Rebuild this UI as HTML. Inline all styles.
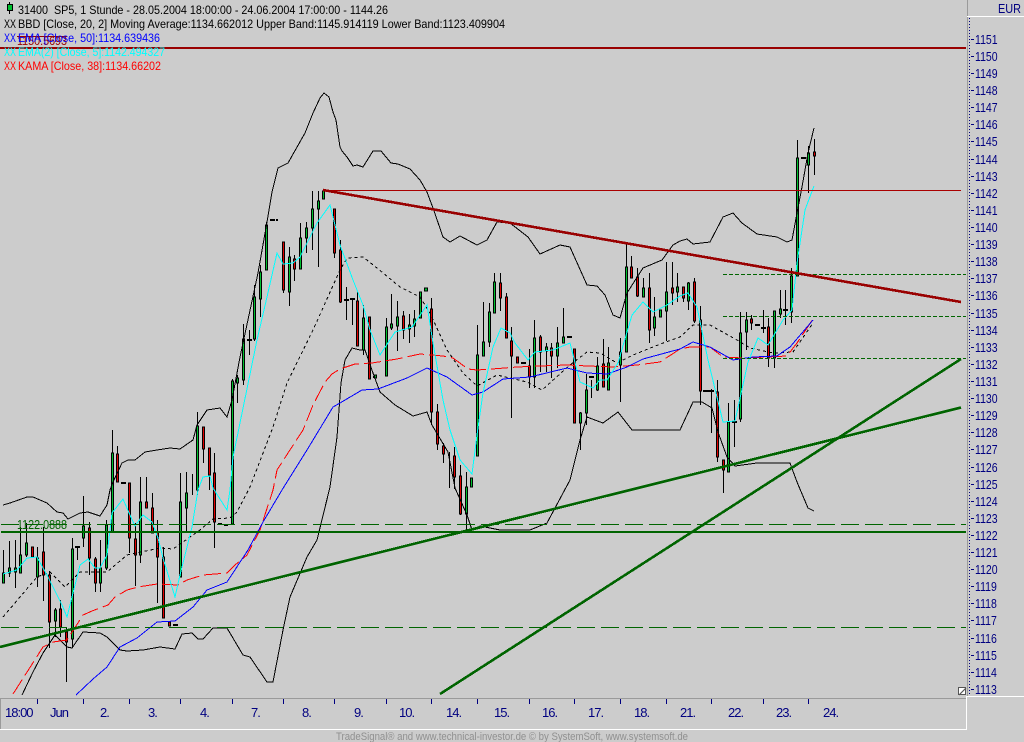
<!DOCTYPE html>
<html><head><meta charset="utf-8"><title>Chart</title>
<style>html,body{margin:0;padding:0;background:#ccc;width:1024px;height:742px;overflow:hidden}
svg{display:block;font-family:"Liberation Sans",Arial,sans-serif}
.l{fill:none;stroke-width:1;shape-rendering:crispEdges}
</style></head><body>
<svg width="1024" height="742" viewBox="0 0 1024 742" xmlns="http://www.w3.org/2000/svg">
<rect width="1024" height="742" fill="#ccc"/>
<!-- candles -->
<path shape-rendering="crispEdges" fill="none" stroke="#000" d="M3.5 550V583M9.5 541V577M15.5 540V588M20.5 527V573M26.5 523V557M32.5 547V557M37.5 547V587M43.5 527V601M49.5 571V648M55.5 608V637M60.5 600V637M66.5 627V682M72.5 538V648M77.5 547V560M83.5 496V547M89.5 522V575M95.5 557V592M100.5 540V592M106.5 520V570M112.5 430V532M117.5 446V482M129.5 483V553M135.5 523V586M140.5 477V563M146.5 477V508M152.5 493V533M157.5 520V603M163.5 547V618M180.5 473V577M186.5 472V533M192.5 474V495M197.5 412V495M203.5 427V463M209.5 448V490M214.5 453V548M232.5 379V524M237.5 375V403M243.5 324V385M249.5 330V355M254.5 285V341M260.5 265V317M266.5 222V270M283.5 242V293M289.5 247V306M294.5 255V281M300.5 223V269M306.5 222V253M312.5 191V250M318.5 191V267M323.5 190V199M334.5 209V258M340.5 240V303M346.5 287V320M352.5 299V325M357.5 291V346M363.5 305V355M369.5 317V379M386.5 318V376M391.5 294V330M397.5 301V351M403.5 311V339M409.5 314V343M414.5 310V337M420.5 292V318M431.5 298V425M437.5 404V450M443.5 443V463M449.5 452V488M454.5 447V489M460.5 465V515M466.5 472V530M477.5 325V456M483.5 302V356M489.5 303V347M494.5 273V313M500.5 273V311M506.5 293V338M511.5 327V418M517.5 357V363M529.5 349V388M534.5 320V388M540.5 335V372M546.5 343V372M551.5 343V378M557.5 327V368M563.5 308V343M574.5 349V423M580.5 412V450M586.5 374V425M591.5 380V398M597.5 357V391M603.5 339V387M608.5 347V390M620.5 338V402M626.5 244V352M631.5 256V278M637.5 268V297M643.5 278V297M649.5 273V343M654.5 297V336M660.5 310V317M666.5 262V341M672.5 262V305M677.5 273V302M683.5 287V302M688.5 282V310M694.5 278V323M700.5 306V405M711.5 389V433M717.5 380V462M723.5 460V493M728.5 403V472M734.5 400V447M740.5 312V422M746.5 312V350M751.5 315V330M763.5 310V333M768.5 318V367M774.5 311V368M780.5 290V318M785.5 290V325M791.5 268V323M797.5 140V276M808.5 146V193M814.5 139V175"/>
<path shape-rendering="crispEdges" fill="none" stroke="#000" stroke-width="2" d="M75 547h5M121 483h5M173 625h5M218 524h4M224 525h4M247 340h5M270 220h5M276 220h2M344 300h5M350 299h5M373 377h3M521 363h5M567 337h5M589 377h5M704 391h5M709 391h5M732 422h5M755 325h5M761 328h5M783 310h5M801 158h5M703 391h3"/>
<path shape-rendering="crispEdges" fill="#00c030" stroke="#000" d="M2.5 573h2v10h-2zM8.5 568h2v5h-2zM14.5 568h2v4h-2zM19.5 555h2v18h-2zM25.5 543h2v12h-2zM36.5 558h2v19h-2zM54.5 610h2v11h-2zM71.5 549h2v90h-2zM82.5 526h2v12h-2zM99.5 568h2v15h-2zM105.5 525h2v43h-2zM111.5 453h2v79h-2zM139.5 502h2v53h-2zM179.5 502h2v75h-2zM185.5 493h2v15h-2zM196.5 426h2v64h-2zM231.5 381h2v143h-2zM236.5 378h2v5h-2zM242.5 339h2v41h-2zM253.5 297h2v42h-2zM259.5 272h2v27h-2zM265.5 225h2v45h-2zM288.5 257h2v35h-2zM299.5 238h2v31h-2zM305.5 228h2v10h-2zM311.5 209h2v19h-2zM317.5 201h2v8h-2zM322.5 191h2v8h-2zM362.5 318h2v32h-2zM374.5 375h2v3h-2zM385.5 327h2v49h-2zM390.5 324h2v4h-2zM396.5 317h2v9h-2zM408.5 325h2v4h-2zM413.5 319h2v7h-2zM419.5 292h2v26h-2zM424.5 288h3v3h-3zM465.5 487h2v27h-2zM470.5 478h2v9h-2zM476.5 355h2v101h-2zM482.5 342h2v14h-2zM488.5 312h2v30h-2zM493.5 282h2v31h-2zM533.5 338h2v39h-2zM545.5 347h2v4h-2zM556.5 343h2v13h-2zM562.5 337h2v6h-2zM579.5 413h2v10h-2zM585.5 390h2v23h-2zM596.5 366h2v24h-2zM607.5 363h2v27h-2zM619.5 352h2v13h-2zM625.5 267h2v85h-2zM642.5 288h2v9h-2zM653.5 317h2v11h-2zM659.5 310h2v7h-2zM665.5 292h2v19h-2zM676.5 287h2v5h-2zM687.5 283h2v18h-2zM727.5 422h2v50h-2zM739.5 333h2v86h-2zM745.5 320h2v12h-2zM773.5 311h2v47h-2zM779.5 309h2v5h-2zM790.5 276h2v36h-2zM796.5 158h2v118h-2zM807.5 153h2v12h-2z"/>
<path shape-rendering="crispEdges" fill="#e00000" stroke="#000" d="M31.5 547h2v10h-2zM42.5 552h2v23h-2zM48.5 575h2v47h-2zM59.5 609h2v18h-2zM65.5 632h2v10h-2zM88.5 528h2v30h-2zM94.5 559h2v24h-2zM116.5 454h2v28h-2zM128.5 483h2v55h-2zM134.5 539h2v16h-2zM145.5 502h2v6h-2zM151.5 508h2v25h-2zM156.5 532h2v25h-2zM162.5 557h2v61h-2zM168.5 622h2v4h-2zM202.5 427h2v22h-2zM208.5 448h2v27h-2zM213.5 473h2v49h-2zM282.5 242h2v48h-2zM293.5 259h2v10h-2zM333.5 209h2v44h-2zM339.5 250h2v52h-2zM356.5 301h2v45h-2zM368.5 317h2v62h-2zM402.5 316h2v14h-2zM430.5 309h2v103h-2zM436.5 412h2v32h-2zM442.5 446h2v8h-2zM453.5 456h2v21h-2zM459.5 476h2v38h-2zM499.5 283h2v15h-2zM505.5 297h2v41h-2zM510.5 341h2v15h-2zM516.5 357h2v6h-2zM528.5 366h2v11h-2zM539.5 337h2v15h-2zM550.5 348h2v8h-2zM573.5 349h2v74h-2zM602.5 364h2v23h-2zM630.5 267h2v11h-2zM636.5 277h2v19h-2zM648.5 288h2v42h-2zM671.5 288h2v5h-2zM682.5 287h2v11h-2zM693.5 282h2v39h-2zM699.5 320h2v71h-2zM716.5 392h2v65h-2zM722.5 460h2v10h-2zM750.5 319h2v4h-2zM767.5 327h2v31h-2zM813.5 152h2v4h-2z"/>
<!-- black dotted middle band -->
<polyline class="l" stroke="#000" stroke-dasharray="3 3" points="3,617 37,577 50,572 65,587 80,572 107,572 127,555 160,548 173,549 200,530 213,519 230,518 237,512 250,487 273,427 287,383 313,330 340,270 347,258 363,257 377,268 400,287 420,297 430,313 447,350 463,373 477,386 497,375 527,382 542,390 570,365 587,352 600,353 617,363 633,355 663,343 680,337 693,325 710,325 737,340 750,348 773,353 793,352 813,323"/>
<!-- upper band -->
<polyline class="l" stroke="#000" points="3,505 10,503 27,497 33,497 47,503 57,512 63,513 68,519 80,513 88,512 100,516 107,505 110,490 113,482 122,463 128,460 135,460 145,452 157,450 170,448 180,449 193,440 197,425 207,410 220,408 227,417 232,400 240,357 258,273 267,222 272,192 278,168 288,163 305,133 313,113 320,98 324,93 329,97 333,112 336,120 340,147 342,151 347,157 353,166 357,165 363,167 373,151 381,151 391,163 398,164 410,169 420,180 427,192 433,208 443,237 450,242 460,236 477,245 487,240 497,222 510,223 528,237 540,254 560,245 570,247 587,285 597,286 605,295 613,315 620,318 627,293 643,268 662,260 673,245 680,241 687,239 693,244 710,242 723,217 733,213 742,223 757,234 777,237 787,242 792,240 797,213 802,187 808,153 814,128"/>
<!-- lower band -->
<polyline class="l" stroke="#000" points="22,695 33,672 43,653 55,635 67,647 72,648 83,632 100,633 107,637 120,650 127,651 143,650 160,647 175,649 182,634 192,633 198,639 203,639 213,628 227,628 243,655 250,657 267,682 273,682 283,630 290,597 307,557 317,540 330,487 337,437 341,383 345,360 352,348 360,350 365,350 373,373 380,392 395,405 413,416 427,412 432,425 448,452 455,488 467,515 472,530 480,526 500,530 530,530 547,523 570,480 580,440 587,417 603,423 618,412 632,430 680,430 693,402 702,402 712,408 718,432 727,457 735,466 757,463 790,463 797,482 808,508 814,511"/>
<!-- KAMA -->
<polyline class="l" stroke="#ff0000" stroke-dasharray="17 5" points="13,694 29,669 43,647 53,642 67,640 83,615 92,611 108,605 115,597 127,590 138,587 157,584 178,585 187,580 203,575 227,573 235,565 247,555 260,530 273,490 277,470 288,453 303,430 313,405 325,382 332,374 340,369 355,364 372,363 397,359 420,354 443,356 453,358 468,369 477,370 492,369 517,367 540,366 567,365 588,366 613,367 637,365 660,362 680,349 690,347 710,347 723,357 743,358 767,357 787,356 797,343 813,319"/>
<!-- EMA 50 -->
<polyline class="l" stroke="#0000ff" points="76,695 93,679 107,667 120,647 137,638 157,622 175,621 193,607 207,590 227,582 248,550 263,522 282,490 307,450 333,407 340,403 362,390 378,389 407,378 427,368 447,377 472,395 483,392 503,379 530,377 567,368 587,373 607,374 627,367 643,359 680,349 693,342 710,347 733,360 753,357 777,356 790,347 813,320"/>
<!-- EMA 2 -->
<polyline class="l" stroke="#00ffff" points="3,574 17,570 27,558 37,557 48,577 62,605 67,617 73,593 80,565 88,559 95,568 100,568 107,555 112,513 123,499 130,515 135,526 143,515 152,522 158,538 163,558 175,597 180,575 192,527 198,490 203,477 210,476 213,488 227,510 230,490 233,457 257,340 267,297 277,253 283,264 293,263 300,257 307,243 317,223 330,205 340,245 353,280 363,305 370,330 380,355 395,332 412,327 427,305 433,343 443,400 450,430 460,460 472,474 477,435 483,393 493,347 501,328 510,333 515,343 528,360 535,352 553,350 570,343 580,382 593,388 600,380 607,380 618,363 632,315 643,302 653,312 667,305 680,296 688,293 697,307 708,360 723,422 735,421 748,362 758,338 768,345 783,320 792,310 797,263 805,210 814,186"/>
<!-- horizontal & trend lines -->
<g shape-rendering="crispEdges">
<rect x="0" y="47" width="966" height="2" fill="#990000"/>
<rect x="323" y="190" width="638" height="1" fill="#aa0000"/>
<rect x="1" y="531" width="965" height="2" fill="#006400"/>
<line x1="1" y1="524.5" x2="966" y2="524.5" stroke="#006400" stroke-dasharray="18 6"/>
<line x1="1" y1="627.5" x2="966" y2="627.5" stroke="#006400" stroke-dasharray="18 6"/>
<line x1="723" y1="274.5" x2="966" y2="274.5" stroke="#006400" stroke-dasharray="4 2"/>
<line x1="723" y1="316.5" x2="966" y2="316.5" stroke="#006400" stroke-dasharray="4 2"/>
<line x1="723" y1="358.5" x2="966" y2="358.5" stroke="#006400" stroke-dasharray="4 2"/>
<line x1="323" y1="190" x2="961" y2="302" stroke="#990000" stroke-width="2.6"/>
<line x1="0" y1="647" x2="961" y2="407.5" stroke="#006400" stroke-width="2.6"/>
<line x1="440" y1="694" x2="961" y2="359" stroke="#006400" stroke-width="2.6"/>
</g>
<!-- legend -->
<g font-size="12">
<text x="17" y="45" fill="#990000" textLength="50" lengthAdjust="spacingAndGlyphs">1150.5693</text>
<rect x="17" y="36" width="50" height="1" fill="#990000"/>
<text x="17" y="529" fill="#006400" font-size="13" textLength="50" lengthAdjust="spacingAndGlyphs">1122.0888</text>
<path d="M9.5 2V14" stroke="#000" shape-rendering="crispEdges"/>
<rect x="7.5" y="4.5" width="5" height="6" fill="#00c030" stroke="#000" shape-rendering="crispEdges"/>
<text x="18" y="14" fill="#000" textLength="370" lengthAdjust="spacingAndGlyphs">31400&#160;&#160;SP5, 1 Stunde - 28.05.2004 18:00:00 - 24.06.2004 17:00:00 - 1144.26</text>
<text x="4" y="28" fill="#000" textLength="12" lengthAdjust="spacingAndGlyphs">XX</text>
<text x="18" y="28" fill="#000" textLength="487" lengthAdjust="spacingAndGlyphs">BBD [Close, 20, 2] Moving Average:1134.662012 Upper Band:1145.914119 Lower Band:1123.409904</text>
<text x="4" y="42" fill="#0000ff" textLength="12" lengthAdjust="spacingAndGlyphs">XX</text>
<text x="18" y="42" fill="#0000ff" textLength="142" lengthAdjust="spacingAndGlyphs">EMA [Close, 50]:1134.639436</text>
<text x="4" y="56" fill="#00ffff" textLength="12" lengthAdjust="spacingAndGlyphs">XX</text>
<text x="18" y="56" fill="#00ffff" textLength="147" lengthAdjust="spacingAndGlyphs">EMA(2) [Close, 5]:1142.494327</text>
<text x="4" y="70" fill="#ff0000" textLength="12" lengthAdjust="spacingAndGlyphs">XX</text>
<text x="18" y="70" fill="#ff0000" textLength="143" lengthAdjust="spacingAndGlyphs">KAMA [Close, 38]:1134.66202</text>
</g>
<!-- right axis -->
<rect x="966" y="0" width="58" height="742" fill="#ccc"/>
<g shape-rendering="crispEdges">
<rect x="967" y="0" width="1" height="697" fill="#9a9a9a"/>
<rect x="967" y="16" width="57" height="1" fill="#fff"/>
<rect x="967" y="696" width="57" height="1" fill="#fff"/>
<line x1="969.5" y1="18" x2="969.5" y2="696" stroke="#000080" stroke-dasharray="1 2"/>
<path stroke="#000080" d="M971 39.500h3M971 56.500h3M971 73.500h3M971 90.500h3M971 107.500h3M971 124.500h3M971 141.500h3M971 159.500h3M971 176.500h3M971 193.500h3M971 210.500h3M971 227.500h3M971 244.500h3M971 261.500h3M971 278.500h3M971 295.500h3M971 313.500h3M971 330.500h3M971 347.500h3M971 364.500h3M971 381.500h3M971 398.500h3M971 415.500h3M971 432.500h3M971 449.500h3M971 467.500h3M971 484.500h3M971 501.500h3M971 518.500h3M971 535.500h3M971 552.500h3M971 569.500h3M971 586.500h3M971 603.500h3M971 620.500h3M971 638.500h3M971 655.500h3M971 672.500h3M971 689.500h3"/>
</g>
<text x="998" y="13" fill="#000080" font-size="13" textLength="23" lengthAdjust="spacingAndGlyphs">EUR</text>
<g fill="#000080" font-size="13" transform="translate(975 0) scale(.81 1)">
<text y="44">1151</text><text y="61">1150</text><text y="78">1149</text><text y="95">1148</text><text y="112">1147</text><text y="129">1146</text><text y="146">1145</text><text y="164">1144</text><text y="181">1143</text><text y="198">1142</text><text y="215">1141</text><text y="232">1140</text><text y="249">1139</text><text y="266">1138</text><text y="283">1137</text><text y="300">1136</text><text y="318">1135</text><text y="335">1134</text><text y="352">1133</text><text y="369">1132</text><text y="386">1131</text><text y="403">1130</text><text y="420">1129</text><text y="437">1128</text><text y="454">1127</text><text y="472">1126</text><text y="489">1125</text><text y="506">1124</text><text y="523">1123</text><text y="540">1122</text><text y="557">1121</text><text y="574">1120</text><text y="591">1119</text><text y="608">1118</text><text y="625">1117</text><text y="643">1116</text><text y="660">1115</text><text y="677">1114</text><text y="694">1113</text>
</g>
<!-- resize icon -->
<rect x="958.500" y="687.500" width="7" height="7" fill="#fff" stroke="#555" shape-rendering="crispEdges"/>
<path d="M959 695L966 688" stroke="#555" stroke-width="1.200"/>
<!-- time axis -->
<rect x="0" y="698" width="966" height="31" fill="#ccc"/>
<g shape-rendering="crispEdges">
<rect x="0" y="698" width="966" height="1" fill="#9a9a9a"/>
<rect x="0" y="698" width="1" height="31" fill="#9a9a9a"/>
<rect x="966" y="696" width="1" height="34" fill="#fff"/>
<rect x="0" y="729" width="967" height="1" fill="#fff"/>
<path stroke="#000080" d="M37.500 699v5M83.500 699v5M129.500 699v5M180.500 699v5M232.500 699v5M283.500 699v5M334.500 699v5M386.500 699v5M431.500 699v5M477.500 699v5M529.500 699v5M574.500 699v5M620.500 699v5M666.500 699v5M711.500 699v5M763.500 699v5M808.500 699v5"/>
</g>
<g fill="#000080" font-size="13" letter-spacing="-1">
<text x="5" y="717">18:00</text><text x="50" y="717">Jun</text><text x="100" y="717">2.</text><text x="148" y="717">3.</text><text x="200" y="717">4.</text><text x="251" y="717">7.</text><text x="302" y="717">8.</text><text x="354" y="717">9.</text><text x="399" y="717">10.</text><text x="446" y="717">14.</text><text x="494" y="717">15.</text><text x="542" y="717">16.</text><text x="588" y="717">17.</text><text x="634" y="717">18.</text><text x="680" y="717">21.</text><text x="728" y="717">22.</text><text x="776" y="717">23.</text><text x="823" y="717">24.</text>
</g>
<text x="336" y="740" fill="#909090" font-size="11" textLength="352" lengthAdjust="spacingAndGlyphs">TradeSignal® and www.technical-investor.de © by  SystemSoft, www.systemsoft.de</text>
</svg>
</body></html>
